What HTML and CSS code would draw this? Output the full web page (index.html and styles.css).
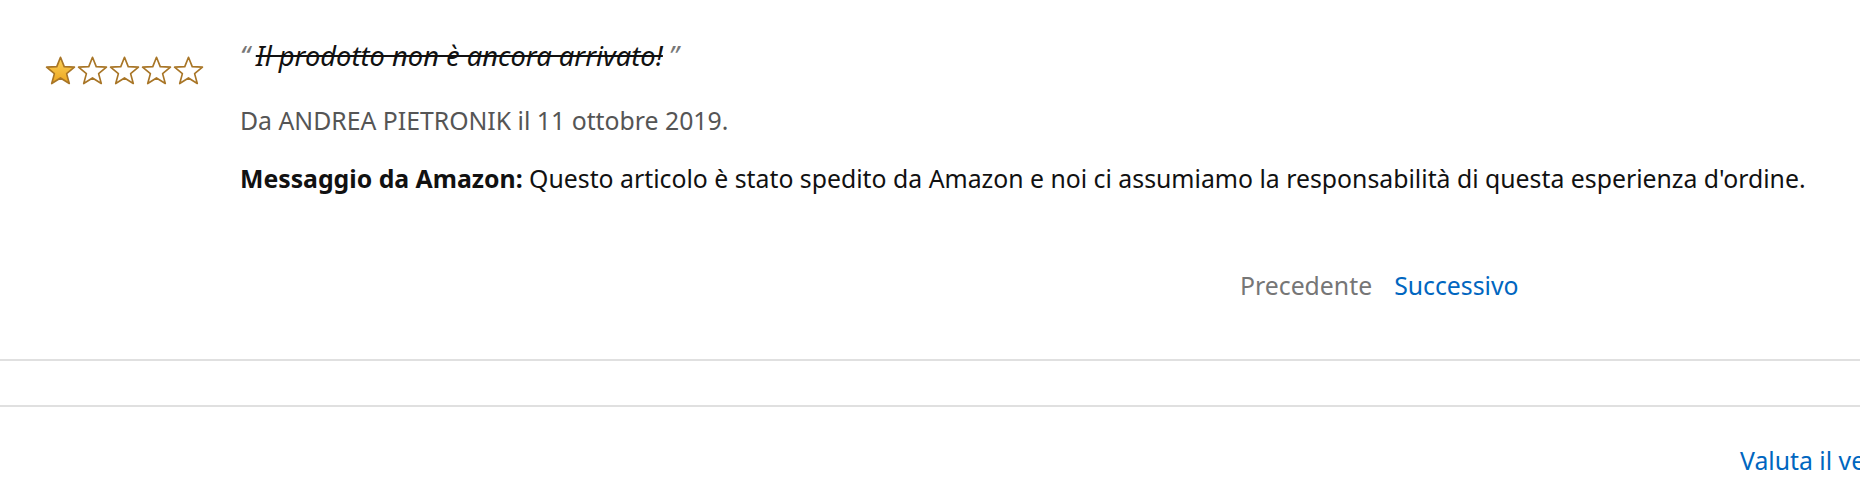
FILE: index.html
```html
<!DOCTYPE html>
<html lang="it">
<head>
<meta charset="utf-8">
<title>Recensione</title>
<link rel="stylesheet" href="styles.css">
</head>
<body>
<div class="review">
  <div class="stars">
    <svg class="star" viewBox="0 0 30 28" width="31" height="29"><defs><linearGradient id="g" x1="0" y1="0" x2="0" y2="1"><stop offset="0" stop-color="#fbd25a"/><stop offset="1" stop-color="#eda51e"/></linearGradient></defs><polygon points="15,1.2 18.6,10.3 28.5,10.8 20.9,17 23.5,26.6 15,21.2 6.5,26.6 9.1,17 1.5,10.8 11.4,10.3" fill="url(#g)" stroke="#a87526" stroke-width="1.6" stroke-linejoin="round"/></svg>
    <svg class="star" viewBox="0 0 30 28" width="31" height="29"><polygon points="15,1.2 18.6,10.3 28.5,10.8 20.9,17 23.5,26.6 15,21.2 6.5,26.6 9.1,17 1.5,10.8 11.4,10.3" fill="#fff" stroke="#a87526" stroke-width="1.6" stroke-linejoin="round"/></svg>
    <svg class="star" viewBox="0 0 30 28" width="31" height="29"><polygon points="15,1.2 18.6,10.3 28.5,10.8 20.9,17 23.5,26.6 15,21.2 6.5,26.6 9.1,17 1.5,10.8 11.4,10.3" fill="#fff" stroke="#a87526" stroke-width="1.6" stroke-linejoin="round"/></svg>
    <svg class="star" viewBox="0 0 30 28" width="31" height="29"><polygon points="15,1.2 18.6,10.3 28.5,10.8 20.9,17 23.5,26.6 15,21.2 6.5,26.6 9.1,17 1.5,10.8 11.4,10.3" fill="#fff" stroke="#a87526" stroke-width="1.6" stroke-linejoin="round"/></svg>
    <svg class="star" viewBox="0 0 30 28" width="31" height="29"><polygon points="15,1.2 18.6,10.3 28.5,10.8 20.9,17 23.5,26.6 15,21.2 6.5,26.6 9.1,17 1.5,10.8 11.4,10.3" fill="#fff" stroke="#a87526" stroke-width="1.6" stroke-linejoin="round"/></svg>
  </div>
  <div class="content">
    <div class="title"><span class="quote">&ldquo;</span><span class="struck">Il prodotto non è ancora arrivato!</span><span class="quote">&rdquo;</span></div>
    <div class="author">Da ANDREA PIETRONIK il 11 ottobre 2019.</div>
    <div class="message"><b>Messaggio da Amazon:</b> Questo articolo è stato spedito da Amazon e noi ci assumiamo la responsabilità di questa esperienza d'ordine.</div>
    <div class="pager">
      <span class="prev">Precedente</span>
      <a class="next" href="#">Successivo</a>
    </div>
  </div>
</div>
<div class="divider"></div>
<div class="spacer"></div>
<div class="divider"></div>
<div class="footer"><a class="rate" href="#">Valuta il venditore</a></div>
</body>
</html>
```
FILE: styles.css
```css
html, body {
  margin: 0;
  padding: 0;
  background: #fff;
  overflow: hidden;
}
body {
  font-family: "Noto Sans", "Open Sans", sans-serif;
  color: #111;
  width: 1860px;
  height: 480px;
}
.review {
  display: flex;
  padding: 40px 0 0 45px;
  height: 359px;
  box-sizing: border-box;
}
.stars {
  display: flex;
  gap: 1px;
  width: 195px;
  padding-top: 16px;
  flex: none;
}
.star { display: block; }
.content {
  display: flex;
  flex-direction: column;
}
.title {
  font-size: 27.3px;
  font-style: italic;
  line-height: 32px;
  color: #111;
}
.quote {
  color: #777;
  padding: 0 6px;
}
.quote:first-child { padding-left: 0; }
.struck {
  text-decoration: line-through;
  text-decoration-thickness: 2px;
}
.author {
  margin-top: 32px;
  font-size: 24.8px;
  color: #555;
  line-height: 32px;
}
.message {
  margin-top: 26px;
  font-size: 24.8px;
  line-height: 32px;
  color: #111;
}
.message b { font-weight: 700; }
.pager {
  display: flex;
  gap: 22px;
  margin-top: 75px;
  padding-left: 1000px;
  font-size: 24.8px;
  line-height: 32px;
}
.prev { color: #767676; }
.next { color: #0066c0; text-decoration: none; }
.divider {
  height: 2px;
  background: #e0e0e0;
}
.spacer { height: 44px; }
.footer {
  padding: 37px 0 0 1740px;
  white-space: nowrap;
  font-size: 24.8px;
  line-height: 32px;
  overflow: hidden;
}
.rate { color: #0066c0; text-decoration: none; }
```
